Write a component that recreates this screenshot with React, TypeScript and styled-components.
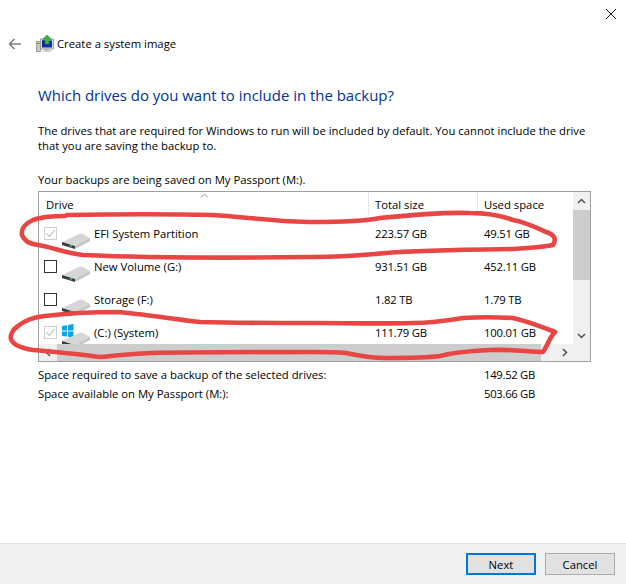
import React from "react";
import styled, { createGlobalStyle } from "styled-components";

const Global = createGlobalStyle`
  html, body { margin: 0; padding: 0; background: #fff; }
  body { font-family: "Open Sans", "Noto Sans", sans-serif; font-size: 11.3px; color: #000; }
`;

const Page = styled.div`
  position: relative;
  width: 626px;
  height: 584px;
  display: flex;
  flex-direction: column;
  overflow: hidden;
  background: #fff;
`;

const TitleBar = styled.div`
  height: 29px;
  display: flex;
  justify-content: flex-end;
  align-items: flex-start;
  padding: 8px 9px 0 0;
  box-sizing: border-box;
`;

const Nav = styled.div`
  height: 30px;
  display: flex;
  align-items: center;
  padding-left: 8px;
`;

const BackIcon = styled.svg`
  margin-right: 14px;
`;

const NavTitle = styled.span`
  margin-left: 3px;
  line-height: 16px;
`;

const Content = styled.main`
  flex: 1;
  padding: 0 32px 0 38px;
  display: flex;
  flex-direction: column;
`;

const Heading = styled.h1`
  margin: 24px 0 0;
  font-size: 14.95px;
  font-weight: 400;
  line-height: 24px;
  color: #003399;
`;

const Description = styled.p`
  margin: 16px 0 0;
  line-height: 15px;
`;

const SavedOn = styled.p`
  margin: 19px 0 0;
  line-height: 16px;
  height: 15px;
`;

const ListBox = styled.div`
  margin-top: 4px;
  width: 553px;
  height: 171px;
  box-sizing: border-box;
  border: 1px solid #a0a0a0;
  display: grid;
  grid-template-columns: 534px 17px;
  grid-template-rows: 152px 17px;
`;

const ListPane = styled.div`
  overflow: hidden;
`;

const HeaderRow = styled.div`
  position: relative;
  display: grid;
  grid-template-columns: 330px 109px 95px;
  height: 25px;
`;

const HeaderCell = styled.div<{ $pad: number }>`
  padding-left: ${(p) => p.$pad}px;
  padding-top: 5px;
  line-height: 16px;
  box-sizing: border-box;
  border-right: 1px solid #e5e5e5;
  height: 23px;
  &:nth-child(3) { border-right: none; }
`;

const SortCaret = styled.svg`
  position: absolute;
  left: 161px;
  top: 1px;
`;

const DriveRow = styled.div`
  display: grid;
  grid-template-columns: 330px 109px 95px;
  height: 33px;
  align-items: center;
`;

const DriveCell = styled.div`
  display: flex;
  align-items: center;
  height: 33px;
`;

const NumCell = styled.div`
  padding-left: 6px;
  letter-spacing: -0.2px;
`;

const NumValue = styled.span`
  letter-spacing: -0.3px;
`;

const CheckBox = styled.span<{ $checked: boolean }>`
  width: 13px;
  height: 13px;
  box-sizing: border-box;
  margin: 0 0 0 5px;
  border: 1px solid ${(p) => (p.$checked ? "#cfcfcf" : "#333")};
  background: #fff;
  display: flex;
  align-items: center;
  justify-content: center;
  flex: none;
`;

const DriveGlyph = styled.svg`
  margin-left: 5px;
  margin-right: 4px;
  flex: none;
`;

const VScroll = styled.div`
  background: #f0f0f0;
  display: flex;
  flex-direction: column;
`;

const ScrollArrow = styled.div`
  height: 17px;
  display: flex;
  align-items: center;
  justify-content: center;
  flex: none;
`;

const VThumb = styled.div`
  height: 70px;
  margin-top: 1px;
  background: #cdcdcd;
`;

const Spacer = styled.div`
  flex: 1;
`;

const HScroll = styled.div`
  background: #f0f0f0;
  display: flex;
`;

const HArrow = styled.div`
  width: 17px;
  display: flex;
  align-items: center;
  justify-content: center;
  flex: none;
`;

const HThumb = styled.div`
  width: 484px;
  margin-left: 1px;
  background: #cdcdcd;
`;

const Corner = styled.div`
  background: #f0f0f0;
`;

const Summary = styled.div`
  margin-top: 3px;
  display: grid;
  grid-template-columns: 446px auto;
  grid-auto-rows: 19px;
  align-items: center;
`;

const Footer = styled.footer`
  height: 41px;
  flex: none;
  background: #f0f0f0;
  border-top: 1px solid #dfdfdf;
  display: flex;
  justify-content: flex-end;
  align-items: flex-start;
  gap: 9px;
  padding: 9px 11px 0 0;
  box-sizing: border-box;
`;

const Button = styled.button<{ $primary?: boolean }>`
  width: 70px;
  height: 22px;
  padding: 0;
  box-sizing: border-box;
  background: #e1e1e1;
  border: ${(p) => (p.$primary ? "2px solid #0078d7" : "1px solid #adadad")};
  font: inherit;
  color: #000;
`;

const Scribble = styled.svg`
  position: absolute;
  left: 0;
  top: 0;
  pointer-events: none;
`;

const Check = () => (
  <svg width="11" height="11" viewBox="0 0 11 11">
    <path d="M1.5 5.5 L4.3 8.3 L9.7 2.2" fill="none" stroke="#c4c4c4" strokeWidth="1.2" />
  </svg>
);

const DriveIcon = ({ system }: { system?: boolean }) => (
  <DriveGlyph width="28" height="33" viewBox="0 0 28 33">
    {system && (
      <g fill="#0aa5e8">
        <path d="M0 10 L5 9.2 V14.6 H0 Z" />
        <path d="M6 9 L11.5 8 V14.6 H6 Z" />
        <path d="M0 15.6 H5 V20.6 L0 20 Z" />
        <path d="M6 15.6 H11.5 V21.6 L6 20.8 Z" />
      </g>
    )}
    <path d="M0 25 L17 17 Q19 16 21 17 L28 21 L13 29 Z" fill="#d6d6d6" />
    <path d="M0 25 L13 29 V32 L0 28 Z" fill="#3a3a3a" />
    <path d="M7.5 27.8 L10 28.6 V30 L7.5 29.2 Z" fill="#46c35a" />
    <path d="M13 29 L28 21 V24 L13 32 Z" fill="#c4c4c4" />
  </DriveGlyph>
);

const SystemIcon = () => (
  <svg width="18" height="18" viewBox="0 0 18 18">
    <rect x="0.5" y="6.5" width="4" height="10" fill="#c9c9c2" stroke="#8d8d88" strokeWidth="0.8" />
    <rect x="1.5" y="8" width="2" height="1" fill="#666" />
    <rect x="4.5" y="4" width="13" height="10" fill="#d7dde0" stroke="#8a9296" strokeWidth="0.8" />
    <rect x="6" y="5.5" width="10" height="7" fill="#0c2fb5" />
    <path d="M6 12.5 L11 5.5 H6 Z" fill="#1b1b80" />
    <rect x="9" y="14" width="4" height="1.6" fill="#a9adab" />
    <rect x="6.5" y="15.4" width="9" height="1.4" fill="#c3c7c5" />
    <path d="M11 0 L15.4 4.2 H13 V9 H9 V4.2 H6.6 Z" fill="#3cb43c" stroke="#1e8a2e" strokeWidth="0.5" />
  </svg>
);

const drives = [
  { name: "EFI System Partition", total: "223.57 GB", used: "49.51 GB", checked: true },
  { name: "New Volume (G:)", total: "931.51 GB", used: "452.11 GB", checked: false },
  { name: "Storage (F:)", total: "1.82 TB", used: "1.79 TB", checked: false },
  { name: "(C:) (System)", total: "111.79 GB", used: "100.01 GB", checked: true, system: true },
];

export default function App() {
  return (
    <Page>
      <Global />
      <TitleBar>
        <svg width="12" height="12" viewBox="0 0 12 12">
          <path d="M1 1 L11 11 M11 1 L1 11" stroke="#222" strokeWidth="1" fill="none" />
        </svg>
      </TitleBar>
      <Nav>
        <BackIcon width="14" height="12" viewBox="0 0 14 12">
          <path d="M6.5 1 L1.5 6 L6.5 11 M1.5 6 H13" stroke="#808080" strokeWidth="1.6" fill="none" />
        </BackIcon>
        <SystemIcon />
        <NavTitle>Create a system image</NavTitle>
      </Nav>
      <Content>
        <Heading>Which drives do you want to include in the backup?</Heading>
        <Description>
          The drives that are required for Windows to run will be included by default. You cannot include the drive that you are saving the backup to.
        </Description>
        <SavedOn>Your backups are being saved on My Passport (M:).</SavedOn>
        <ListBox>
          <ListPane>
            <HeaderRow>
              <HeaderCell $pad={7}>Drive</HeaderCell>
              <HeaderCell $pad={6}>Total size</HeaderCell>
              <HeaderCell $pad={6}>Used space</HeaderCell>
              <SortCaret width="9" height="6" viewBox="0 0 9 6">
                <path d="M1 4.5 L4.5 1 L8 4.5" stroke="#9a9a9a" fill="none" strokeWidth="1" />
              </SortCaret>
            </HeaderRow>
            {drives.map((d) => (
              <DriveRow key={d.name}>
                <DriveCell>
                  <CheckBox $checked={d.checked}>{d.checked && <Check />}</CheckBox>
                  <DriveIcon system={d.system} />
                  <span>{d.name}</span>
                </DriveCell>
                <NumCell>{d.total}</NumCell>
                <NumCell>{d.used}</NumCell>
              </DriveRow>
            ))}
          </ListPane>
          <VScroll>
            <ScrollArrow>
              <svg width="9" height="6" viewBox="0 0 9 6"><path d="M1 5 L4.5 1.5 L8 5" stroke="#505050" strokeWidth="1.5" fill="none" /></svg>
            </ScrollArrow>
            <VThumb />
            <Spacer />
            <ScrollArrow>
              <svg width="9" height="6" viewBox="0 0 9 6"><path d="M1 1 L4.5 4.5 L8 1" stroke="#505050" strokeWidth="1.5" fill="none" /></svg>
            </ScrollArrow>
          </VScroll>
          <HScroll>
            <HArrow>
              <svg width="6" height="9" viewBox="0 0 6 9"><path d="M5 1 L1.5 4.5 L5 8" stroke="#505050" strokeWidth="1.5" fill="none" /></svg>
            </HArrow>
            <HThumb />
            <Spacer />
            <HArrow>
              <svg width="6" height="9" viewBox="0 0 6 9"><path d="M1 1 L4.5 4.5 L1 8" stroke="#505050" strokeWidth="1.5" fill="none" /></svg>
            </HArrow>
          </HScroll>
          <Corner />
        </ListBox>
        <Summary>
          <span>Space required to save a backup of the selected drives:</span>
          <NumValue>149.52 GB</NumValue>
          <span>Space available on My Passport (M:):</span>
          <NumValue>503.66 GB</NumValue>
        </Summary>
      </Content>
      <Footer>
        <Button $primary>Next</Button>
        <Button>Cancel</Button>
      </Footer>
      <Scribble width="626" height="584" viewBox="0 0 626 584">
        <g fill="none" stroke="#e84545" strokeWidth="4.6" strokeLinecap="round" strokeLinejoin="round">
          <path d="M65 216 C50 216 38 218 33 220 C24 224 21 230 22 235 C24 241 30 244 38 245 C55 248 66 253 83 255 C150 258 240 258 313 257 C340 257 353 256 375 254 C410 250 460 250 513 249 C530 248 545 247 553 245 C556 240 556 235 546 232 C535 227 525 222 513 220 C500 215 485 213 470 213 C440 212 410 215 380 218 C365 221 340 222 313 222 C280 222 245 217 213 215 C170 214 120 214 67 215" />
          <path d="M45 316 C35 317 25 320 18 326 C12 330 10 336 11 339 C13 345 20 348 33 350 C45 351 55 352 65 353 C80 354 90 356 100 357 C115 356 125 354 150 353 C200 352 260 352 313 352 C325 352 335 352 346 353 C360 356 370 358 385 358 C410 358 425 358 440 356 C455 352 470 351 490 350 C510 349 530 352 543 352 C548 345 549 338 555 332 C545 328 530 322 513 318 C495 317 480 317 463 318 C445 321 430 323 413 323 C380 324 345 323 313 323 C275 323 235 323 200 322 C170 319 145 314 117 312 C95 312 70 313 45 316" />
        </g>
      </Scribble>
    </Page>
  );
}
